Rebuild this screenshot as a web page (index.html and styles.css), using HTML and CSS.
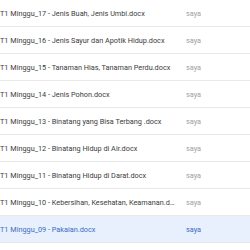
FILE: index.html
```html
<!DOCTYPE html>
<html lang="en">
<head>
    <meta charset="UTF-8">
    <title>Files</title>
    <link rel="stylesheet" href="styles.css">
</head>
<body>
    <div class="file-list">
        <div class="file-row"><span class="file-name">T1 Minggu_17 - Jenis Buah, Jenis Umbi.docx</span><span class="file-owner">saya</span></div>
        <div class="file-row"><span class="file-name">T1 Minggu_16 - Jenis Sayur dan Apotik Hidup.docx</span><span class="file-owner">saya</span></div>
        <div class="file-row"><span class="file-name">T1 Minggu_15 - Tanaman Hias, Tanaman Perdu.docx</span><span class="file-owner">saya</span></div>
        <div class="file-row"><span class="file-name">T1 Minggu_14 - Jenis Pohon.docx</span><span class="file-owner">saya</span></div>
        <div class="file-row"><span class="file-name">T1 Minggu_13 - Binatang yang Bisa Terbang .docx</span><span class="file-owner">saya</span></div>
        <div class="file-row"><span class="file-name">T1 Minggu_12 - Binatang Hidup di Air.docx</span><span class="file-owner">saya</span></div>
        <div class="file-row"><span class="file-name">T1 Minggu_11 - Binatang Hidup di Darat.docx</span><span class="file-owner">saya</span></div>
        <div class="file-row"><span class="file-name">T1 Minggu_10 - Kebersihan, Kesehatan, Keamanan.docx</span><span class="file-owner">saya</span></div>
        <div class="file-row selected"><span class="file-name">T1 Minggu_09 - Pakaian.docx</span><span class="file-owner">saya</span></div>
    </div>
</body>
</html>
```

FILE: styles.css
```css
body {
    margin: 0;
    font-family: Roboto, Arial, sans-serif;
    font-size: 7.3px;
    background-color: #fff;
    overflow: hidden;
}
.file-list {
    width: 250px;
}
.file-row {
    display: flex;
    align-items: center;
    height: 26px;
    border-bottom: 1px solid #e8e8e8;
    color: #3c3c3c;
}
.file-name {
    width: 178px;
    white-space: nowrap;
    overflow: hidden;
    text-overflow: ellipsis;
}
.file-owner {
    margin-left: 8px;
    color: #a0a0a0;
}
.selected {
    background-color: #e8f0fe;
}
.selected .file-name,
.selected .file-owner {
    color: #3d6cc0;
}
```
